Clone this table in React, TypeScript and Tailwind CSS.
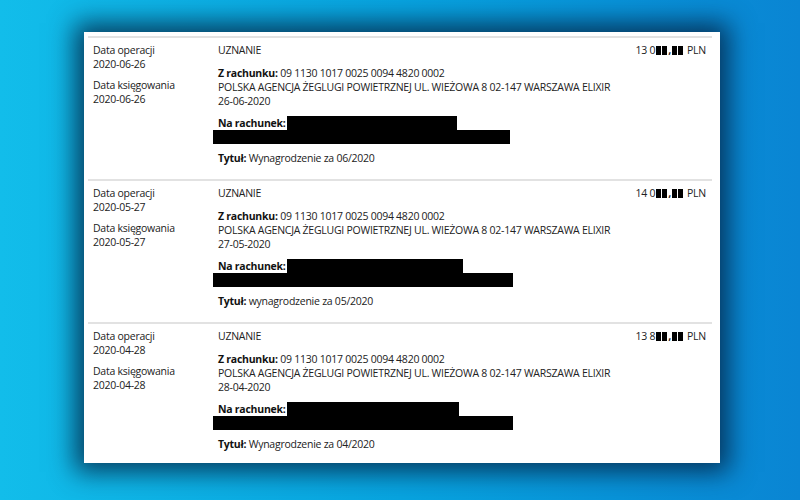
type Entry = {
  opDate: string;
  bookDate: string;
  valueDate: string;
  amountHead: string;
  title: string;
  box1: string;
  box2: string;
};

const entries: Entry[] = [
  {
    opDate: "2020-06-26",
    bookDate: "2020-06-26",
    valueDate: "26-06-2020",
    amountHead: "13 0",
    title: "Wynagrodzenie za 06/2020",
    box1: "w-[170px]",
    box2: "w-[297px]",
  },
  {
    opDate: "2020-05-27",
    bookDate: "2020-05-27",
    valueDate: "27-05-2020",
    amountHead: "14 0",
    title: "wynagrodzenie za 05/2020",
    box1: "w-[176px]",
    box2: "w-[300px]",
  },
  {
    opDate: "2020-04-28",
    bookDate: "2020-04-28",
    valueDate: "28-04-2020",
    amountHead: "13 8",
    title: "Wynagrodzenie za 04/2020",
    box1: "w-[172px]",
    box2: "w-[300px]",
  },
];

function Amount({ head }: { head: string }) {
  // hidden digits are shown as black bars, like in the scan
  return (
    <div className="flex shrink-0 items-center self-start whitespace-nowrap">
      <span>{head}</span>
      <span className="ml-[1px] inline-block h-[9px] w-[5px] bg-black" />
      <span className="ml-[1px] inline-block h-[9px] w-[5px] bg-black" />
      <span className="mx-[1px] font-bold">,</span>
      <span className="inline-block h-[9px] w-[5px] bg-black" />
      <span className="ml-[1px] inline-block h-[9px] w-[5px] bg-black" />
      <span className="ml-[4px]">PLN</span>
    </div>
  );
}

function Row({ entry }: { entry: Entry }) {
  return (
    <div className="flex border-t-2 border-[#e2e2e2] pb-[14px] pl-[5px] pr-[6px] pt-[5px]">
      <div className="w-[125px] shrink-0">
        <div>Data operacji</div>
        <div>{entry.opDate}</div>
        <div className="mt-[7px]">Data księgowania</div>
        <div>{entry.bookDate}</div>
      </div>
      <div className="min-w-0 flex-1">
        <div>UZNANIE</div>
        <div className="mt-[9px]">
          <span className="font-bold text-[#111]">Z rachunku:</span> 09 1130 1017 0025 0094 4820 0002
        </div>
        <div className="whitespace-nowrap">
          POLSKA AGENCJA ŻEGLUGI POWIETRZNEJ UL. WIEŻOWA 8 02-147 WARSZAWA ELIXIR
        </div>
        <div>{entry.valueDate}</div>
        <div className="mt-[8px] flex items-center">
          <span className="font-bold text-[#111]">Na rachunek:</span>
          <span className={`ml-[1px] inline-block h-[14px] bg-black ${entry.box1}`} />
        </div>
        <div className={`-ml-[5px] h-[14px] bg-black ${entry.box2}`} />
        <div className="mt-[7px]">
          <span className="font-bold text-[#111]">Tytuł:</span> {entry.title}
        </div>
      </div>
      <Amount head={entry.amountHead} />
    </div>
  );
}

export default function App() {
  return (
    <div className="h-[500px] w-[800px] overflow-hidden bg-linear-to-r from-[#12bdea] via-[#08a4e0] to-[#0a85d3] pl-[84px] pt-[32px]">
      <div
        className="h-[431px] w-[636px] overflow-hidden bg-white pl-[4px] pr-[8px] pt-[4px] text-[10.5px] leading-[14px] tracking-[-0.25px] text-[#222] shadow-[0_0_24px_9px_rgba(4,30,60,0.78)]"
        style={{ fontFamily: '"Open Sans", "Noto Sans", sans-serif' }}
      >
        {entries.map((e) => (
          <Row key={e.opDate} entry={e} />
        ))}
      </div>
    </div>
  );
}
